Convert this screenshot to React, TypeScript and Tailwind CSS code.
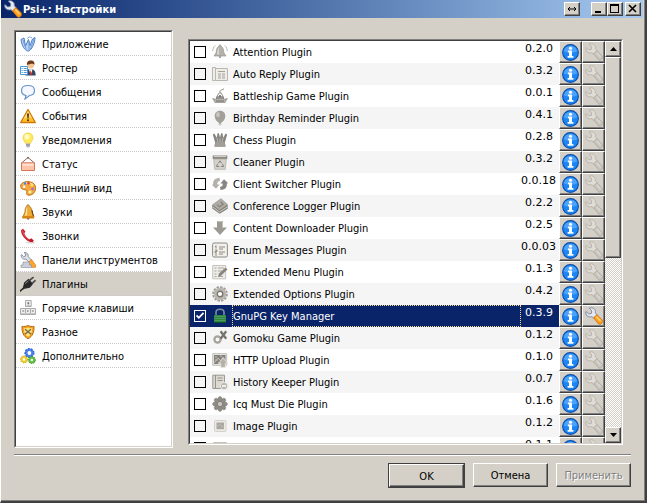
import type { ReactNode } from 'react'

const ink = '#77746f'
const mid = '#a5a29c'
const pale = '#d8d5cf'

function Icon({ children }: { children: ReactNode }) {
  return (
    <svg viewBox="0 0 16 16" className="size-4 shrink-0" aria-hidden="true">
      {children}
    </svg>
  )
}

function Wrench({ off = false }: { off?: boolean }) {
  return (
    <svg viewBox="0 0 16 16" className="size-[18px] shrink-0" aria-hidden="true">
      <path
        d="M.8 4 3.4 6.2 5.6 5.7 6 3.4 3.8 1C6.8-.2 9.8 2 9.2 5.2L11 7 8 10 6 8.6C3 9.6-.2 7.2.8 4Z"
        fill={off ? '#e0ddd7' : '#e4e8f2'}
        stroke={off ? '#b4b0a8' : '#76819a'}
        strokeWidth=".8"
      />
      <path
        d="M7.6 9.6 10.6 6.8 15 11.2C16.6 13.4 14 16.4 11.8 14.8Z"
        fill={off ? '#c9c5bd' : '#ffa11c'}
        stroke={off ? '#b0aca4' : '#cf750c'}
        strokeWidth=".8"
      />
      <path d="m10.2 8.6 3.6 3.8" stroke={off ? '#dad7d1' : '#ffd07a'} strokeWidth="1.2" />
    </svg>
  )
}

function InfoIcon() {
  return (
    <svg viewBox="0 0 16 16" className="size-[17px] shrink-0" aria-hidden="true">
      <circle cx="8" cy="8" r="7.4" fill="#1b86f4" stroke="#0b4cab" strokeWidth="1" />
      <path d="M1.8 7C2.2 3.8 4.8 1.7 8 1.7S13.8 3.8 14.2 7C10 8.6 6 8.6 1.8 7Z" fill="#6db8ff" opacity=".6" />
      <circle cx="8" cy="4" r="1.5" fill="#fff" />
      <path d="M5.6 6.2h3.8v5.2h1.3v1.5H5.3v-1.5h1.3V7.7h-1Z" fill="#fff" />
    </svg>
  )
}

const sections = [
  {
    name: 'Приложение',
    icon: (
      <Icon>
        <path d="M1 3.5 4 2 5.5 10 8.5 3.5 10 9.5 12.5 3 15 1.5C15 7 12 13.5 8.5 15.2 4 14 2 10 1 3.5Z" fill="#b8d2f3" stroke="#4a7ec6" />
        <path d="m3 4 3 9M9 5v9M14 2.5 10.5 13" stroke="#6f9edb" fill="none" />
        <path d="M7 2.5 9.5.8 12 2" stroke="#7ba6df" fill="none" />
      </Icon>
    ),
  },
  {
    name: 'Ростер',
    icon: (
      <Icon>
        <path d="M5.5 15.5C5.5 11 7 9.5 8.5 9.2h4C14.5 9.6 15.7 12 15.7 15.5Z" fill="#344765" />
        <path d="m9 9.2 1.7 6.3 1.8-6.3Z" fill="#fff" />
        <path d="m10.7 10-1 4 1 1.5 1-1.5Z" fill="#d92525" />
        <circle cx="10.7" cy="5" r="3.4" fill="#f5c394" />
        <path d="M7 5C6.5 1.6 8.4.4 10.8.4S15 1.6 14.4 5C13.5 2.9 10 3.8 7 5Z" fill="#6d3a1c" />
        <path d="M.5 6.5h7v8h-7Z" fill="#fff" stroke="#4d98d6" />
        <path d="M1.5 8.5h1.2m1 0h3m-5.2 2h1.2m1 0h3m-5.2 2h1.2m1 0h3" stroke="#4d98d6" />
      </Icon>
    ),
  },
  {
    name: 'Сообщения',
    icon: (
      <Icon>
        <path d="M8 1.5c4 0 6.5 2 6.5 5s-2.3 4.8-5 5L5 15l1-3.5c-2.8-.5-4.5-2.2-4.5-5 0-3 2.5-5 6.5-5Z" fill="#f5f9ff" stroke="#6b93ca" strokeWidth="1.2" />
      </Icon>
    ),
  },
  {
    name: 'События',
    icon: (
      <Icon>
        <path d="M8 1.5 15.3 14.5H.7Z" fill="#ffbf28" stroke="#cf7a08" strokeWidth="1.3" strokeLinejoin="round" />
        <path d="M8 3 12 10C8 9 5.5 9.5 3 12Z" fill="#ffe28a" />
        <path d="M7 5.5h2L8.6 10.5H7.4Z" fill="#5b2d04" />
        <circle cx="8" cy="12.3" r="1" fill="#5b2d04" />
      </Icon>
    ),
  },
  {
    name: 'Уведомления',
    icon: (
      <Icon>
        <path d="M8 1c3.2 0 5 2.2 5 4.8 0 2.8-2.2 3.6-2.5 5.7h-5C5.2 9.4 3 8.6 3 5.8 3 3.2 4.8 1 8 1Z" fill="#ffea59" stroke="#f3cf3c" strokeWidth=".8" />
        <ellipse cx="7" cy="4.8" rx="2.5" ry="2.8" fill="#fffbc9" />
        <path d="M6 11.5h4v3L8.8 15.5H7.2L6 14.5Z" fill="#b8bbc2" />
        <path d="M6 13h4" stroke="#80848e" />
      </Icon>
    ),
  },
  {
    name: 'Статус',
    icon: (
      <Icon>
        <path d="m1.5 7 6.5-5.5L14.5 7" fill="none" stroke="#8e6a5e" />
        <path d="M1.5 6.8h13v7.7h-13Z" fill="#ffc3a8" stroke="#d8775a" />
        <path d="M2.5 7.8h11v2h-11Z" fill="#ffe0d2" />
        <circle cx="8" cy="1.7" r="1" fill="#8e6a5e" />
      </Icon>
    ),
  },
  {
    name: 'Внешний вид',
    icon: (
      <Icon>
        <path d="M1 4.5C3 .8 13 0 15.3 6c1 3.5-.6 8-4.8 9-4 .8-4.5-1.3-3.7-3 .8-2-1.5-2.2-3.3-2.5C.8 9 .2 6.5 1 4.5Z" fill="#f5a63c" stroke="#b96513" strokeWidth=".9" />
        <path d="M2 4.5C5 1.5 11.5 1.5 14 5 10 3.5 6 4 2 4.5Z" fill="#ffdb95" />
        <circle cx="4.2" cy="6.8" r="1.3" fill="#fff" />
        <circle cx="5" cy="3.5" r="1.2" fill="#3c88db" />
        <circle cx="8.5" cy="3.3" r="1.2" fill="#d23f32" />
        <circle cx="12" cy="5.3" r="1.2" fill="#fbee58" />
        <circle cx="12.6" cy="8.8" r="1.4" fill="#a46add" />
        <circle cx="10" cy="12" r="1.6" fill="#e8f8a0" />
      </Icon>
    ),
  },
  {
    name: 'Звуки',
    icon: (
      <Icon>
        <path d="M8 .7c1 0 1.2.8 1.1 1.5 2.4.8 2.5 3.3 2.6 5.8L14 12.5H3L5 8c.1-2.5.3-5 2-5.8C6.8 1.5 7 .7 8 .7Z" fill="#efac34" stroke="#9b5d0d" strokeWidth=".7" />
        <path d="M7.3 3.3C5.6 4.6 6.4 8 5 11.5h2Z" fill="#ffe596" />
        <path d="M2.2 12h12v2.5h-12Z" fill="#d68515" />
        <path d="M6.5 14.5h3.2l-1.6 1.3Z" fill="#573006" />
        <path d="m12 6 1.3 6" stroke="#713a05" />
      </Icon>
    ),
  },
  {
    name: 'Звонки',
    icon: (
      <Icon>
        <ellipse cx="10.5" cy="14.6" rx="4.5" ry="1" fill="#d9d9d9" />
        <path d="M1 2.2 3 .8 5.4 3.6 4.3 5.2C5.6 7.8 7.4 9.8 9.8 11.2L11.3 10.3 13.8 12.6 12.6 14.3C7 14 1 8 1 2.2Z" fill="#c71825" />
        <path d="M5.2 5.6C6.3 7.8 7.8 9.5 9.8 10.8" stroke="#fff" strokeWidth="1.4" fill="none" />
        <path d="M2.6 2.4C2.8 6 5.4 9.6 8.4 11.6" stroke="#ee7880" strokeWidth=".8" fill="none" />
      </Icon>
    ),
  },
  {
    name: 'Панели инструментов',
    icon: (
      <Icon>
        <path d="M1.4 2.6 3.6 4.6 5.6 4 5.7 2 4 .6C7 .2 8.7 2.2 8.2 4.7L12 8.4 9.5 10.6 6 7.2C2.8 7.6.6 5.4 1.4 2.6Z" fill="#dfe2ea" stroke="#838b9c" />
        <path d="m8.6 10 3-2.4 3.9 5.4v2.3h-4Z" fill="#ffa62c" stroke="#ce7b18" strokeWidth=".7" />
        <path d="M3 10h6.5v3h2v2.5H1V13h2Z" fill="#cbd0d8" stroke="#858c98" strokeWidth=".6" />
      </Icon>
    ),
  },
  {
    name: 'Плагины',
    icon: (
      <Icon>
        <path d="M0 15.5C1.2 13.5 2.8 12.8 4 12" stroke="#333" strokeWidth="1.7" fill="none" />
        <path d="M2.4 13.2 4.2 6.4 8.4 2.8 13.2 7.8 9.8 11.8Z" fill="#292929" />
        <path d="m5.2 7.6 3.2-2.8" stroke="#8d8d8d" />
        <path d="m9.6 4.2 4-3.1m-1.4 6.2 3.4-3.1" stroke="#4c4c4c" strokeWidth="1.8" />
      </Icon>
    ),
  },
  {
    name: 'Горячие клавиши',
    icon: (
      <Icon>
        <path d="M5.5.5h5.7v6H5.5ZM.5 8.5h5v6h-5ZM5.5 8.5h5v6h-5ZM10.5 8.5h5v6h-5Z" fill="#eee" stroke="#aaa" />
        <path d="M6.5 5.5h4M1 13.5h14" stroke="#c7c7c7" />
        <path d="M8.3 2v2.5M7.3 3.2h2M2.2 11h2M7.9 10v2m4-1h2" stroke="#777" />
      </Icon>
    ),
  },
  {
    name: 'Разное',
    icon: (
      <Icon>
        <path d="M8 1.5c2 1 4 1.2 6 .8.3 6-1.5 10.2-6 12.4-4.5-2.2-6.3-6.4-6-12.4 2 .4 4 .2 6-.8Z" fill="#f5a21c" stroke="#b56b10" />
        <path d="M8 3.5c1.5.8 2.8 1 4.2.8 0 4-1.3 6.7-4.2 8.5-2.9-1.8-4.2-4.5-4.2-8.5 1.4.2 2.7 0 4.2-.8Z" fill="#ffe37a" />
        <path d="m5 5.2 6 5M11 5.2l-6 5" stroke="#73664d" strokeWidth="1.3" />
      </Icon>
    ),
  },
  {
    name: 'Дополнительно',
    icon: (
      <Icon>
        <circle cx="9.4" cy="5" r="3.2" fill="none" stroke="#4a80ee" strokeWidth="2.6" />
        <circle cx="9.4" cy="5" r="4.5" fill="none" stroke="#2d5fd0" strokeWidth="1.2" strokeDasharray="1.7 1.5" />
        <circle cx="4" cy="11.4" r="2.4" fill="none" stroke="#f0cf2c" strokeWidth="2.2" />
        <circle cx="4" cy="11.4" r="3.5" fill="none" stroke="#b78d0a" strokeWidth=".9" strokeDasharray="1.3 1.3" />
        <circle cx="11.9" cy="12" r="2.4" fill="none" stroke="#5fc13c" strokeWidth="2.2" />
        <circle cx="11.9" cy="12" r="3.5" fill="none" stroke="#318a1a" strokeWidth=".9" strokeDasharray="1.3 1.3" />
      </Icon>
    ),
  },
]

const plugins = [
  {
    name: 'Attention Plugin',
    version: '0.2.0',
    icon: (
      <Icon>
        <path d="M8 1c1 0 1.3.8 1.2 1.4C11.8 3.4 11.5 7 12 9l2 3H2l2-3c.5-2 .2-5.6 2.8-6.6C6.7 1.8 7 1 8 1Z" fill="#b4b1ab" stroke="#8f8c87" strokeWidth=".6" />
        <path d="M6.8 3.5C5.3 5 5.7 8 5 10.5h2Z" fill="#dedcd7" />
        <path d="M6.5 12.5h3L8 14.2Z" fill={ink} />
        <path d="M3.2 1.5C1.2 3 .8 5.2.8 7M12.8 1.5c2 1.5 2.4 3.7 2.4 5.5" stroke="#b6b3ad" fill="none" />
      </Icon>
    ),
  },
  {
    name: 'Auto Reply Plugin',
    version: '0.3.2',
    icon: (
      <Icon>
        <path d="M.5 1.5h3v13h-3ZM3.5 2.5h12v12h-12Z" fill="#efede8" stroke="#bab7b0" />
        <path d="M6 5.5h7M6 8h3m1 0h3m-7 2h3m1 0h3m-7 2h3m1 0h3" stroke={mid} />
      </Icon>
    ),
  },
  {
    name: 'Battleship Game Plugin',
    version: '0.0.1',
    icon: (
      <Icon>
        <path d="m.7 10.5 3.5 1 .5-3h6.6l.5 3 3.5-1-2.3 4H3Z" fill="#b7b4ae" stroke="#8c8984" strokeWidth=".7" />
        <path d="M5 8.5 7 5h2.3L11 8.5M8 2.5V5M8.5 2.5 12 .8" stroke="#96938d" fill="none" />
        <path d="M4 10h8M4 13h8" stroke="#716f6a" />
        <circle cx="8" cy="8" r="1" fill="#66635f" />
      </Icon>
    ),
  },
  {
    name: 'Birthday Reminder Plugin',
    version: '0.4.1',
    icon: (
      <Icon>
        <path d="M8 .8c3.5 0 5.3 2.4 5.3 5.2 0 3-2 5.8-4.4 7l.8 1.5H6.4l.8-1.5C4.8 11.8 2.7 9 2.7 6 2.7 3.2 4.5.8 8 .8Z" fill="#a3a09a" />
        <ellipse cx="6" cy="4.7" rx="1.8" ry="2.6" fill="#c9c6c1" />
        <path d="M8 13.5V16" stroke={pale} />
      </Icon>
    ),
  },
  {
    name: 'Chess Plugin',
    version: '0.2.8',
    icon: (
      <Icon>
        <path d="m.8 2.5 1.7-1 2.2 4.2.8-4.4h1.4L8 5.6l1.1-4.3h1.4l.8 4.4 2.2-4.2 1.7 1-2.4 8.3.7 2.2v1.7h-11V13l.7-2.2Z" fill="#8a8782" />
        <path d="M3.5 11h9M3 13h10M5 6l1 4m5-4-1 4M8 6.5V10" stroke="#b9b6b0" />
      </Icon>
    ),
  },
  {
    name: 'Cleaner Plugin',
    version: '0.3.2',
    icon: (
      <Icon>
        <path d="M.7 1.5h14.6V5H.7Z" fill="#8e8b85" />
        <path d="M2 2.5h12" stroke="#cecbc4" />
        <path d="m1.7 5 1 10.3h10.6l1-10.3Z" fill="#d5d2cb" stroke="#aaa79f" strokeWidth=".7" />
        <path d="m6.3 9.3 1.7-2.5 1.7 2.5M5.5 10l-1 2.5h2.8m1.7 0h2.7l-1.2-2.6" fill="none" stroke="#85827b" />
      </Icon>
    ),
  },
  {
    name: 'Client Switcher Plugin',
    version: '0.0.18',
    icon: (
      <Icon>
        <path d="M7.5 2C3.5 2 .8 4 1.2 8.2L0 9l4 3.8L7.6 8.6 5.4 8.4C5 6.4 5.8 5.2 8 5Z" fill="#b4b1ab" />
        <path d="M8.5 14c4 0 6.7-2 6.3-6.2L16 7l-4-3.8-3.6 4.2 2.2.2c.4 2-.4 3.2-2.6 3.4Z" fill="#898681" />
      </Icon>
    ),
  },
  {
    name: 'Conference Logger Plugin',
    version: '0.2.2',
    icon: (
      <Icon>
        <path d="M.3 6.8 9 .4l6.7 6v4.4L7.6 15.8.3 10.6Z" fill="#84817b" />
        <path d="M.3 6.8 9 .4l6.7 6-8.1 5.6Z" fill="#aeaba5" />
        <path d="m5 6.6 2.6 2.2 3.6-2.6-2.6-2.2" stroke="#85827b" strokeWidth="1.2" fill="none" />
        <path d="m1 9.2 6.6 4.7 7.6-4.8" stroke="#d0cdc7" fill="none" />
      </Icon>
    ),
  },
  {
    name: 'Content Downloader Plugin',
    version: '0.2.5',
    icon: (
      <Icon>
        <path d="M5 1h6v6.5h4L8 15 1 7.5h4Z" fill="#9d9a94" />
        <path d="M5.5 1.5h5V8" stroke="#c5c2bc" fill="none" />
      </Icon>
    ),
  },
  {
    name: 'Enum Messages Plugin',
    version: '0.0.03',
    icon: (
      <Icon>
        <rect x=".6" y="1" width="14.8" height="14" rx="1.5" fill="#f1efe9" stroke="#8d8a83" />
        <path d="M4 3.5v3M3 4.5h1M3 8h2v1.5H3V11h2M7 5h6M7 7h4M7 10h6m-6 2h4M3 13h2" stroke="#8d8a83" fill="none" />
      </Icon>
    ),
  },
  {
    name: 'Extended Menu Plugin',
    version: '0.1.3',
    icon: (
      <Icon>
        <path d="M.7 1.5h13v13.3H.7Z" fill="#eeece7" stroke="#c7c4be" />
        <path d="M2.5 4h2m1.5 0h6M2.5 7h2M6 7h4m-7.5 3h2m-2 2.5h2m1.5 0h5" stroke="#aaa79f" />
        <path d="m6 12.7 1-3.2 6.5-6 2 2-6.5 6.3Z" fill="#89867f" />
      </Icon>
    ),
  },
  {
    name: 'Extended Options Plugin',
    version: '0.4.2',
    icon: (
      <Icon>
        <circle cx="8" cy="8" r="6.9" fill="none" stroke="#9d9a94" strokeWidth="1.8" strokeDasharray="2.4 1.2" />
        <circle cx="8" cy="8" r="4.8" fill="none" stroke="#b9b6af" strokeWidth="3" />
        <circle cx="8" cy="8" r="2.8" fill="#fff" stroke={ink} strokeWidth="1.4" />
      </Icon>
    ),
  },
  {
    name: 'GnuPG Key Manager',
    version: '0.3.9',
    enabled: true,
    icon: (
      <Icon>
        <path d="M4 7V4.5C4 2.5 5.5 1.3 8 1.3s4 1.2 4 3.2V7" stroke="#78909a" strokeWidth="1.6" fill="none" />
        <rect x="2" y="7" width="12" height="8" rx=".7" fill="#2c8542" />
        <path d="M2.5 8.5h11m-11 2h11m-11 2h11" stroke="#4b9c5c" />
        <path d="M2 14.5h12" stroke="#144f28" />
      </Icon>
    ),
  },
  {
    name: 'Gomoku Game Plugin',
    version: '0.1.2',
    icon: (
      <Icon>
        <circle cx="5.5" cy="9.5" r="3.1" fill="none" stroke={mid} strokeWidth="2.2" />
        <path d="m8.6 1.2 5.6 7.6m0-7.6L8.6 8.8" stroke={ink} strokeWidth="2.3" />
      </Icon>
    ),
  },
  {
    name: 'HTTP Upload Plugin',
    version: '0.1.0',
    icon: (
      <Icon>
        <path d="M.7 1.7h14v11.6h-14Z" fill="#eceae5" stroke="#c1beb7" />
        <path d="M2 3h11.5v9H2Z" fill="#85827c" />
        <path d="m2 11 4-5 3 3 2-4 2.5 3M3 5h2m3-1h2M3 8h3m0 3h3" stroke="#c3c0b9" fill="none" />
        <path d="m11 6.2 4.6 5h-2.3v4.2H8.7v-4.2H6.4Z" fill="#b3b0a9" stroke="#eceae5" strokeWidth=".8" />
      </Icon>
    ),
  },
  {
    name: 'History Keeper Plugin',
    version: '0.0.7',
    icon: (
      <Icon>
        <path d="M.8 1.2h11.7v13.3H.8Z" fill="#dcd9d3" stroke="#9c9992" />
        <path d="M3.5 1v13M5.5 4h5m-5 2.5h5" stroke="#96938d" />
        <circle cx="12" cy="12" r="3.7" fill="#bbb8b1" stroke="#eceae5" />
        <path d="M10 12h4" stroke="#fff" strokeWidth="1.5" />
      </Icon>
    ),
  },
  {
    name: 'Icq Must Die Plugin',
    version: '0.1.6',
    icon: (
      <Icon>
        <g fill="#918e88" stroke="#75726c" strokeWidth=".5">
          <ellipse cx="8" cy="3.4" rx="2" ry="2.8" />
          <ellipse cx="8" cy="3.4" rx="2" ry="2.8" transform="rotate(45 8 8)" />
          <ellipse cx="8" cy="3.4" rx="2" ry="2.8" transform="rotate(90 8 8)" />
          <ellipse cx="8" cy="3.4" rx="2" ry="2.8" transform="rotate(135 8 8)" />
          <ellipse cx="8" cy="3.4" rx="2" ry="2.8" transform="rotate(180 8 8)" />
          <ellipse cx="8" cy="3.4" rx="2" ry="2.8" transform="rotate(225 8 8)" />
          <ellipse cx="8" cy="3.4" rx="2" ry="2.8" transform="rotate(270 8 8)" />
          <ellipse cx="8" cy="3.4" rx="2" ry="2.8" transform="rotate(315 8 8)" />
        </g>
        <circle cx="8" cy="8" r="2" fill="#c9c6c0" />
      </Icon>
    ),
  },
  {
    name: 'Image Plugin',
    version: '0.1.2',
    icon: (
      <Icon>
        <rect x="2.5" y="2.5" width="11.5" height="11" rx="1" fill="#eceae5" stroke="#d3d0ca" />
        <path d="M4.5 4.5h7.5v6.7H4.5Z" fill="#aaa7a1" />
        <path d="m4.5 9 3-2.5 4.5 3" stroke="#c2bfb9" fill="none" />
      </Icon>
    ),
  },
  {
    name: 'Juick Plugin',
    version: '0.1.1',
    icon: (
      <Icon>
        <rect x="1" y="2.5" width="14" height="11" rx="1" fill="#eceae5" stroke="#c5c2bb" />
      </Icon>
    ),
  },
]

const raised =
  'flex items-center justify-center border border-t-white border-l-white border-r-[#404040] border-b-[#404040] bg-[#d4d0c8] shadow-[inset_-1px_-1px_0_#808080]'

const sunken =
  'border border-t-[#808080] border-l-[#808080] border-r-white border-b-white'

const sunkenInner =
  'border border-t-[#404040] border-l-[#404040] border-r-[#d4d0c8] border-b-[#d4d0c8] bg-white'

function TitleBar() {
  return (
    <header className="flex h-[18px] shrink-0 items-center bg-linear-to-r from-[#0a246a] to-[#a6caf0] pr-0.5 pl-[3px]">
      <Wrench />
      <h1 className="flex-1 pt-0.5 pl-px font-bold text-white">Psi+: Настройки</h1>
      <button aria-label="Растянуть" className={`${raised} mr-[11px] h-3.5 w-4`}>
        <svg viewBox="0 0 10 8" className="h-2 w-2.5" fill="none" stroke="#000">
          <path d="M1 4h8M3 2 1 4l2 2M7 2l2 2-2 2" />
        </svg>
      </button>
      <button aria-label="Свернуть" className={`${raised} h-3.5 w-4`}>
        <svg viewBox="0 0 10 10" className="size-2.5">
          <path d="M1 7h6v2H1Z" />
        </svg>
      </button>
      <button aria-label="Развернуть" className={`${raised} mr-0.5 h-3.5 w-4`}>
        <svg viewBox="0 0 10 10" className="size-2.5">
          <path d="M0 0h9v9H0ZM1 2v6h7V2Z" fillRule="evenodd" />
        </svg>
      </button>
      <button aria-label="Закрыть" className={`${raised} h-3.5 w-4`}>
        <svg viewBox="0 0 10 10" className="size-2.5" stroke="#000" strokeWidth="1.6">
          <path d="m1 1 7 7M8 1 1 8" />
        </svg>
      </button>
    </header>
  )
}

function Sections() {
  return (
    <nav className={`${sunken} flex w-[159px] shrink-0`}>
      <ul className={`${sunkenInner} flex-1 overflow-hidden`}>
        {sections.map((section) => (
          <li key={section.name} className={section.name === 'Плагины' ? 'bg-[#d4d0c8]' : ''}>
            <button className="flex h-6 w-full items-center gap-1.5 border-b border-dotted border-[#c8c8c8] pl-1 text-left whitespace-nowrap">
              {section.icon}
              <span className="pt-0.5">{section.name}</span>
            </button>
          </li>
        ))}
      </ul>
    </nav>
  )
}

function PluginRow({ plugin }: { plugin: (typeof plugins)[number] }) {
  const on = Boolean(plugin.enabled)
  return (
    <li className={`flex h-[22px] ${on ? 'bg-[#0a246a] text-white' : 'odd:bg-white even:bg-[#f5f5f5]'}`}>
      <label className="flex min-w-0 flex-1 items-center pl-1">
        <span className="grid size-3 shrink-0 place-items-center">
          <input
            type="checkbox"
            defaultChecked={on}
            className={`peer col-start-1 row-start-1 size-3 appearance-none border ${on ? 'border-white' : 'border-black'}`}
          />
          <svg viewBox="0 0 8 8" className="pointer-events-none invisible col-start-1 row-start-1 size-2 peer-checked:visible" aria-hidden="true">
            <path d="m.5 3.5 2.3 2.3L7.5 1" fill="none" stroke={on ? '#fff' : '#000'} strokeWidth="1.8" />
          </svg>
        </span>
        <span className="mr-1 ml-1.5">{plugin.icon}</span>
        <span
          className={`flex h-full flex-1 items-center border border-dotted pt-0.5 whitespace-nowrap ${on ? 'border-[#f5db95]' : 'border-transparent'}`}
        >
          {plugin.name}
        </span>
      </label>
      <span className="w-[38px] pr-1.5 text-right font-['DejaVu_Sans',sans-serif]">{plugin.version}</span>
      <button aria-label={`О плагине ${plugin.name}`} className={`${raised} w-[23px] text-black`}>
        <InfoIcon />
      </button>
      <button aria-label={`Настроить ${plugin.name}`} disabled={!on} className={`${raised} w-[23px]`}>
        <Wrench off={!on} />
      </button>
    </li>
  )
}

function ScrollBar() {
  return (
    <div className="flex w-4 shrink-0 flex-col bg-[repeating-conic-gradient(#d4d0c8_0_25%,#fff_0_50%)] bg-size-[2px_2px]">
      <button aria-label="Вверх" className={`${raised} h-4 shrink-0`}>
        <svg viewBox="0 0 7 4" className="h-1 w-[7px]">
          <path d="M3.5 0 7 4H0Z" />
        </svg>
      </button>
      <div className={`${raised} h-1/2`} />
      <button aria-label="Вниз" className={`${raised} mt-auto h-4 shrink-0`}>
        <svg viewBox="0 0 7 4" className="h-1 w-[7px]">
          <path d="M0 0h7L3.5 4Z" />
        </svg>
      </button>
    </div>
  )
}

export default function App() {
  return (
    <div className="flex h-screen bg-white pr-px font-['DejaVu_Sans_Condensed','DejaVu_Sans',sans-serif] text-[11px] leading-4 text-black">
      <main className="flex min-w-0 flex-1 flex-col border-r-2 border-b-2 border-l border-r-[#404040] border-b-[#404040] border-l-white bg-[#d4d0c8] shadow-[inset_-1px_-1px_0_#808080]">
        <div className="pr-0.5">
          <TitleBar />
        </div>
        <div className="flex min-h-0 flex-1 flex-col pt-3 pr-3.5 pb-[13px] pl-[13px]">
          <div className="flex min-h-0 flex-1 gap-[15px] pr-2">
            <Sections />
            <section className="flex min-w-0 flex-1 pt-[9px] pb-[3px]">
              <div className={`${sunken} flex min-w-0 flex-1`}>
                <div className={`${sunkenInner} flex min-w-0 flex-1`}>
                  <ul className="min-w-0 flex-1 overflow-hidden">
                    {plugins.map((plugin) => (
                      <PluginRow key={plugin.name} plugin={plugin} />
                    ))}
                  </ul>
                  <ScrollBar />
                </div>
              </div>
            </section>
          </div>
          <hr className="mt-1.5 h-0.5 shrink-0 border-t border-b border-t-[#808080] border-b-white" />
          <footer className="mt-[7px] flex shrink-0 items-start justify-end gap-2">
            <button autoFocus className="w-[77px] border border-[#404040] outline-none">
              <span className={`${raised} h-[23px] pt-0.5`}>OK</span>
            </button>
            <button className={`${raised} h-6 w-[75px] pt-0.5`}>Отмена</button>
            <button disabled className={`${raised} h-6 w-[75px] pt-0.5 text-[#808080] text-shadow-[1px_1px_0_#fff]`}>
              Применить
            </button>
          </footer>
        </div>
      </main>
    </div>
  )
}
